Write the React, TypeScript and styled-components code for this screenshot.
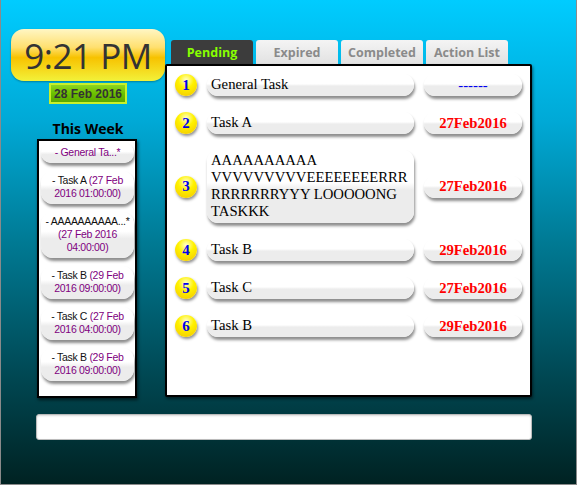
import React from "react";
import styled, { createGlobalStyle } from "styled-components";

const Global = createGlobalStyle`
  html, body { margin: 0; padding: 0; }
  body { width: 577px; height: 485px; overflow: hidden; }
  * { box-sizing: border-box; }
`;

const Page = styled.div`
  width: 577px;
  height: 485px;
  border: 1px solid #8a8a8a;
  border-top: none;
  background: linear-gradient(180deg, #00ccff 0%, #00a9d6 25%, #007a94 50%, #004752 78%, #002222 100%);
  display: flex;
  flex-direction: column;
`;

const Main = styled.div`
  display: flex;
  align-items: flex-start;
  padding-left: 10px;
`;

const LeftCol = styled.div`
  width: 154px;
  padding-top: 29px;
  display: flex;
  flex-direction: column;
  align-items: center;
`;

const Clock = styled.div`
  width: 154px;
  height: 52px;
  border-radius: 13px;
  background: linear-gradient(180deg, #fff6c4 0%, #ffe070 35%, #f7c200 55%, #f5dc20 80%, #f2f23a 100%);
  box-shadow: 0 1px 2px rgba(0, 0, 0, 0.3);
  display: flex;
  align-items: center;
  justify-content: center;
  font-family: "Open Sans", "DejaVu Sans", sans-serif;
  font-size: 35px;
  color: #333;
  letter-spacing: -0.5px;
`;

const DateBox = styled.div`
  margin-top: 2px;
  width: 78px;
  height: 21px;
  border: 2px solid #c8f02a;
  background: linear-gradient(180deg, #8ed620 0%, #6cc000 50%, #5aa800 100%);
  display: flex;
  align-items: center;
  justify-content: center;
  white-space: nowrap;
  font-family: "Liberation Sans", Arial, sans-serif;
  font-weight: bold;
  font-size: 12px;
  color: #333;
`;

const WeekTitle = styled.div`
  margin-top: 15px;
  height: 19px;
  font-family: "Open Sans", "DejaVu Sans", sans-serif;
  font-weight: bold;
  font-size: 14px;
  color: #000;
  line-height: 19px;
`;

const WeekList = styled.div`
  margin-top: 1px;
  margin-left: -2px;
  width: 100px;
  height: 259px;
  background: #fff;
  border: 2px solid #000;
  box-shadow: 1px 2px 3px rgba(0, 0, 0, 0.6);
  padding: 2px 1px 0 2px;
  display: flex;
  flex-direction: column;
  gap: 8px;
`;

const WeekItem = styled.div`
  border-radius: 12px;
  background: linear-gradient(180deg, #ffffff 0%, #ffffff 42%, #ececec 58%, #ececec 100%);
  box-shadow: 1px 3px 3px rgba(0, 0, 0, 0.45);
  padding: 3px 2px 4px;
  text-align: center;
  font-family: "Liberation Sans", Arial, sans-serif;
  font-size: 10.5px;
  line-height: 13px;
  letter-spacing: -0.3px;
  color: #111;
`;

const Purple = styled.span`
  color: #800080;
`;

const RightCol = styled.div`
  width: 367px;
  padding-top: 40px;
  display: flex;
  flex-direction: column;
`;

const Tabs = styled.div`
  display: flex;
  gap: 3px;
  padding-left: 6px;
`;

const Tab = styled.div<{ $active?: boolean }>`
  width: 82px;
  height: 24px;
  border-radius: 3px 3px 0 0;
  display: flex;
  align-items: center;
  justify-content: center;
  font-family: "Open Sans", "DejaVu Sans", sans-serif;
  font-weight: bold;
  font-size: 12.5px;
  color: ${(p) => (p.$active ? "#88ff00" : "#8a8a8a")};
  background: ${(p) =>
    p.$active ? "#3c3c3c" : "linear-gradient(180deg, #f4f4f4 0%, #e2e2e2 100%)"};
`;

const Panel = styled.div`
  height: 333px;
  background: #fff;
  border: 2px solid #000;
  border-radius: 2px;
  box-shadow: 1px 2px 3px rgba(0, 0, 0, 0.5);
  padding: 8px 8px 0 8px;
  display: flex;
  flex-direction: column;
  gap: 16px;
`;

const Row = styled.div`
  display: flex;
  align-items: center;
`;

const Badge = styled.div`
  width: 22px;
  height: 22px;
  flex: none;
  border-radius: 50%;
  background: radial-gradient(circle at 50% 28%, #ffffd0 0%, #fff200 40%, #f2c400 100%);
  box-shadow: 1px 2px 3px rgba(0, 0, 0, 0.45);
  display: flex;
  align-items: center;
  justify-content: center;
  font-family: "Liberation Serif", serif;
  font-weight: bold;
  font-size: 15px;
  color: #0000ee;
`;

const Pill = styled.div`
  border-radius: 11px;
  background: linear-gradient(180deg, #ffffff 0%, #ffffff 45%, #ececec 55%, #ececec 100%);
  box-shadow: 1px 3px 3px rgba(0, 0, 0, 0.45);
  font-family: "Liberation Serif", serif;
  font-size: 14.7px;
  line-height: 17px;
`;

const TaskPill = styled(Pill)`
  margin-left: 10px;
  width: 207px;
  min-height: 22px;
  padding: 2px 3px 3px 4px;
  color: #000;
  overflow-wrap: anywhere;
`;

const DatePill = styled(Pill)<{ $empty?: boolean }>`
  margin-left: 10px;
  width: 98px;
  height: 22px;
  display: flex;
  align-items: center;
  justify-content: center;
  font-weight: ${(p) => (p.$empty ? "normal" : "bold")};
  color: ${(p) => (p.$empty ? "#0000ee" : "#ff0000")};
`;

const Footer = styled.div`
  padding: 16px 0 0 35px;
`;

const Input = styled.input`
  width: 496px;
  height: 26px;
  border: 1px solid #bbb;
  border-radius: 3px;
  background: #fff;
  box-shadow: inset 0 1px 2px rgba(0, 0, 0, 0.15);
  outline: none;
  display: block;
`;

const tasks = [
  { n: 1, name: "General Task", date: "------" },
  { n: 2, name: "Task A", date: "27Feb2016" },
  { n: 3, name: "AAAAAAAAAA VVVVVVVVVEEEEEEEERRRRRRRRRRYYY LOOOOONG TASKKK", date: "27Feb2016" },
  { n: 4, name: "Task B", date: "29Feb2016" },
  { n: 5, name: "Task C", date: "27Feb2016" },
  { n: 6, name: "Task B", date: "29Feb2016" },
];

const week = [
  { name: "- General Ta...*", date: "" },
  { name: "- Task A ", date: "(27 Feb 2016 01:00:00)" },
  { name: "- AAAAAAAAAA...* ", date: "(27 Feb 2016 04:00:00)" },
  { name: "- Task B ", date: "(29 Feb 2016 09:00:00)" },
  { name: "- Task C ", date: "(27 Feb 2016 04:00:00)" },
  { name: "- Task B ", date: "(29 Feb 2016 09:00:00)" },
];

export default function App() {
  return (
    <Page>
      <Global />
      <Main>
        <LeftCol>
          <Clock>9:21 PM</Clock>
          <DateBox>28 Feb 2016</DateBox>
          <WeekTitle>This Week</WeekTitle>
          <WeekList>
            {week.map((w, i) => (
              <WeekItem key={i}>
                {i === 0 ? <Purple>{w.name}</Purple> : w.name}
                {w.date && <Purple>{w.date}</Purple>}
              </WeekItem>
            ))}
          </WeekList>
        </LeftCol>
        <RightCol>
          <Tabs>
            <Tab $active>Pending</Tab>
            <Tab>Expired</Tab>
            <Tab>Completed</Tab>
            <Tab>Action List</Tab>
          </Tabs>
          <Panel>
            {tasks.map((t) => (
              <Row key={t.n}>
                <Badge>{t.n}</Badge>
                <TaskPill>{t.name}</TaskPill>
                <DatePill $empty={t.date === "------"}>{t.date}</DatePill>
              </Row>
            ))}
          </Panel>
        </RightCol>
      </Main>
      <Footer>
        <Input />
      </Footer>
    </Page>
  );
}
